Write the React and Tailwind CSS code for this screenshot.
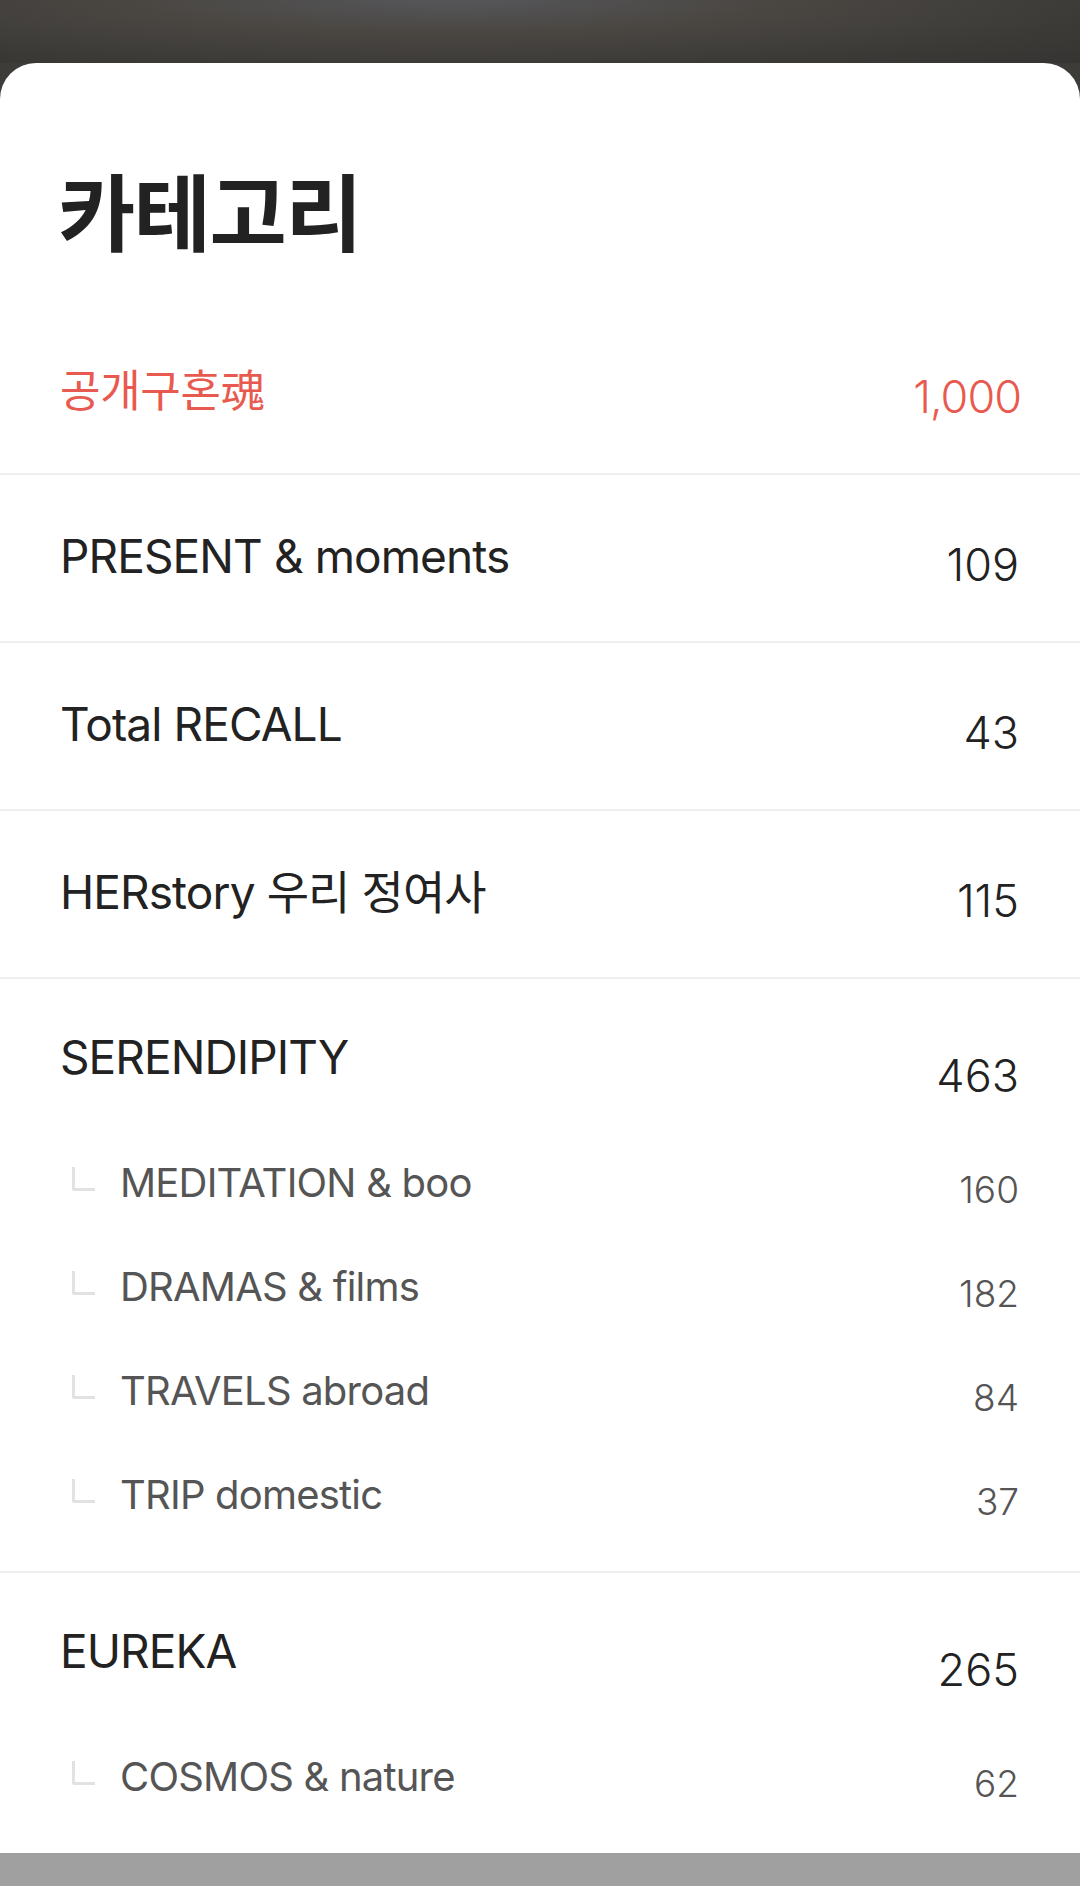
import React from 'react';

const FONT = "font-['Inter','Noto_Sans_CJK_KR',sans-serif]";

const rows = [
    { name: 'PRESENT & moments', count: 109 },
    { name: 'Total RECALL', count: 43 },
    { name: 'HERstory 우리 정여사', count: 115 },
];

const groups = [
    {
        name: 'SERENDIPITY',
        count: 463,
        children: [
            { name: 'MEDITATION & boo', count: 160 },
            { name: 'DRAMAS & films', count: 182 },
            { name: 'TRAVELS abroad', count: 84 },
            { name: 'TRIP domestic', count: 37 },
        ],
    },
    {
        name: 'EUREKA',
        count: 265,
        children: [{ name: 'COSMOS & nature', count: 62 }],
    },
];

const SubRow = ({ name, count }) => (
    <div className="h-[104px] flex items-center justify-between pl-[72px] pr-[61px]">
        <div className="flex items-center">
            <div className="w-[23px] h-[24px] border-l-[3px] border-b-[3px] border-[#e2e2e2] rounded-bl-[3px] mb-[8px]" />
            <span className="ml-[25px] text-[40px] leading-none text-[#555555] tracking-[-0.8px]">{name}</span>
        </div>
        <span className="text-[37px] leading-none font-light text-[#555555] mt-[12px]">{count}</span>
    </div>
);

const App = () => {
    return (
        <div className={`h-[1886px] w-[1080px] flex flex-col overflow-hidden bg-[#3e3c39] ${FONT}`}>
            <div className="h-[63px] shrink-0 bg-[radial-gradient(ellipse_at_42%_0%,#56565a_0%,#4a4743_35%,#3c3a37_75%,#363432_100%)]" />

            <div className="flex-1 bg-white rounded-t-[36px] overflow-hidden">
                <div className="h-[244px] pl-[58px] pt-[104px]">
                    <h1 className="font-['Noto_Sans_CJK_KR',sans-serif] font-bold text-[84px] leading-none tracking-[-1.5px] text-[#222222]">
                        카테고리
                    </h1>
                </div>

                <div className="h-[168px] border-b-2 border-[#efefef] flex items-center justify-between pl-[60px] pr-[59px]">
                    <span className="font-['Noto_Sans_CJK_KR',sans-serif] text-[44px] leading-none text-[#e85a4f] tracking-[-0.3px] mb-[4px]">
                        공개구혼魂
                    </span>
                    <span className="text-[45px] leading-none font-light text-[#e85a4f] tracking-[-1px] mt-[12px]">1,000</span>
                </div>

                {rows.map((row) => (
                    <div
                        key={row.name}
                        className="h-[168px] border-b-2 border-[#efefef] flex items-center justify-between pl-[60px] pr-[61px]"
                    >
                        <span className="text-[46px] leading-none text-[#222222] tracking-[-0.9px] mb-[4px]">{row.name}</span>
                        <span className="text-[45px] leading-none font-light text-[#222222] mt-[12px]">{row.count}</span>
                    </div>
                ))}

                {groups.map((group, i) => (
                    <div key={group.name} className={i === 0 ? 'pb-[24px] border-b-2 border-[#efefef]' : 'pb-[24px]'}>
                        <div className="h-[152px] flex items-center justify-between pl-[60px] pr-[61px]">
                            <span className="text-[46px] leading-none text-[#222222] tracking-[-0.9px] mt-[4px]">{group.name}</span>
                            <span className="text-[45px] leading-none font-light text-[#222222] mt-[40px]">{group.count}</span>
                        </div>
                        {group.children.map((child) => (
                            <SubRow key={child.name} name={child.name} count={child.count} />
                        ))}
                    </div>
                ))}
            </div>

            <div className="h-[33px] shrink-0 bg-[#a0a0a0]" />
        </div>
    );
};

export default App;
